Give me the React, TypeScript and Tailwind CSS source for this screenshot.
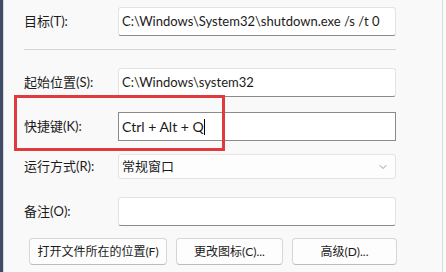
import { ChevronDown } from 'lucide-react'

const font = { fontFamily: 'Lato, "Noto Sans CJK SC", sans-serif' }

function Field({ label, value, className = '' }: { label: string; value?: string; className?: string }) {
  return (
    <div className={`flex items-center ${className}`}>
      <div className="w-[94px] text-[13px] text-[#1b1b1b]">{label}</div>
      <div className="w-[278px] h-[29px] bg-white border border-[#e3e3e3] border-b-[#8a8a8a] rounded-[3px] pl-[3px] pt-[3px] text-[13px] leading-[20px] text-[#1b1b1b] whitespace-nowrap overflow-hidden">
        {value}
      </div>
    </div>
  )
}

export default function App() {
  return (
    <div className="w-[446px] h-[272px] flex overflow-hidden bg-[#f9f9f9]" style={font}>
      {/* desktop strip on the left */}
      <div className="w-[3px] bg-[#3f4b68]" />
      <div className="w-px bg-[#d8d8d8]" />

      <div className="relative flex-1 flex flex-col pl-[20px] pt-[7px]">
        <Field label="目标(T):" value="C:\Windows\System32\shutdown.exe /s /t 0" />

        <div className="w-[372px] h-px bg-[#d5d5d5] mt-[13px]" />

        <Field label="起始位置(S):" value="C:\Windows\system32" className="mt-[18px]" />

        {/* shortcut field, focused */}
        <div className="flex items-center mt-[15px]">
          <div className="w-[94px] text-[13px] text-[#1b1b1b]">快捷键(K):</div>
          <div className="w-[278px] h-[29px] bg-white border border-[#8a8a8a] pl-[3px] pt-[4px] text-[14px] leading-[20px] text-[#1b1b1b] flex items-start">
            <span>Ctrl + Alt + Q</span>
            <span className="w-px h-[16px] bg-black mt-[2px]" />
          </div>
        </div>

        <div className="flex items-center mt-[13px]">
          <div className="w-[94px] text-[13px] text-[#1b1b1b]">运行方式(R):</div>
          <div className="w-[278px] h-[25px] bg-[#fdfdfd] border border-[#e3e3e3] rounded-[3px] pl-[3px] pr-[6px] flex items-center justify-between text-[13px] text-[#1b1b1b]">
            <span>常规窗口</span>
            <ChevronDown size={12} strokeWidth={1.2} className="text-[#555]" />
          </div>
        </div>

        <Field label="备注(O):" className="mt-[18px]" />

        <div className="flex gap-[9px] mt-[12px] pl-[5px]">
          <button className="w-[138px] h-[27px] bg-[#fdfdfd] border border-[#d6d6d6] border-b-[#bcbcbc] rounded-[4px] text-[12px] text-[#1b1b1b]">
            打开文件所在的位置(F)
          </button>
          <button className="w-[107px] h-[27px] bg-[#fdfdfd] border border-[#d6d6d6] border-b-[#bcbcbc] rounded-[4px] text-[12px] text-[#1b1b1b]">
            更改图标(C)...
          </button>
          <button className="w-[105px] h-[27px] bg-[#fdfdfd] border border-[#d6d6d6] border-b-[#bcbcbc] rounded-[4px] text-[12px] text-[#1b1b1b]">
            高级(D)...
          </button>
        </div>

        {/* red annotation around the shortcut row */}
        <div className="absolute left-[10px] top-[95px] w-[211px] h-[56px] border-[3px] border-[#e03a3e]" />
      </div>

      <div className="w-px bg-[#dcdcdc] mr-[3px]" />
    </div>
  )
}
